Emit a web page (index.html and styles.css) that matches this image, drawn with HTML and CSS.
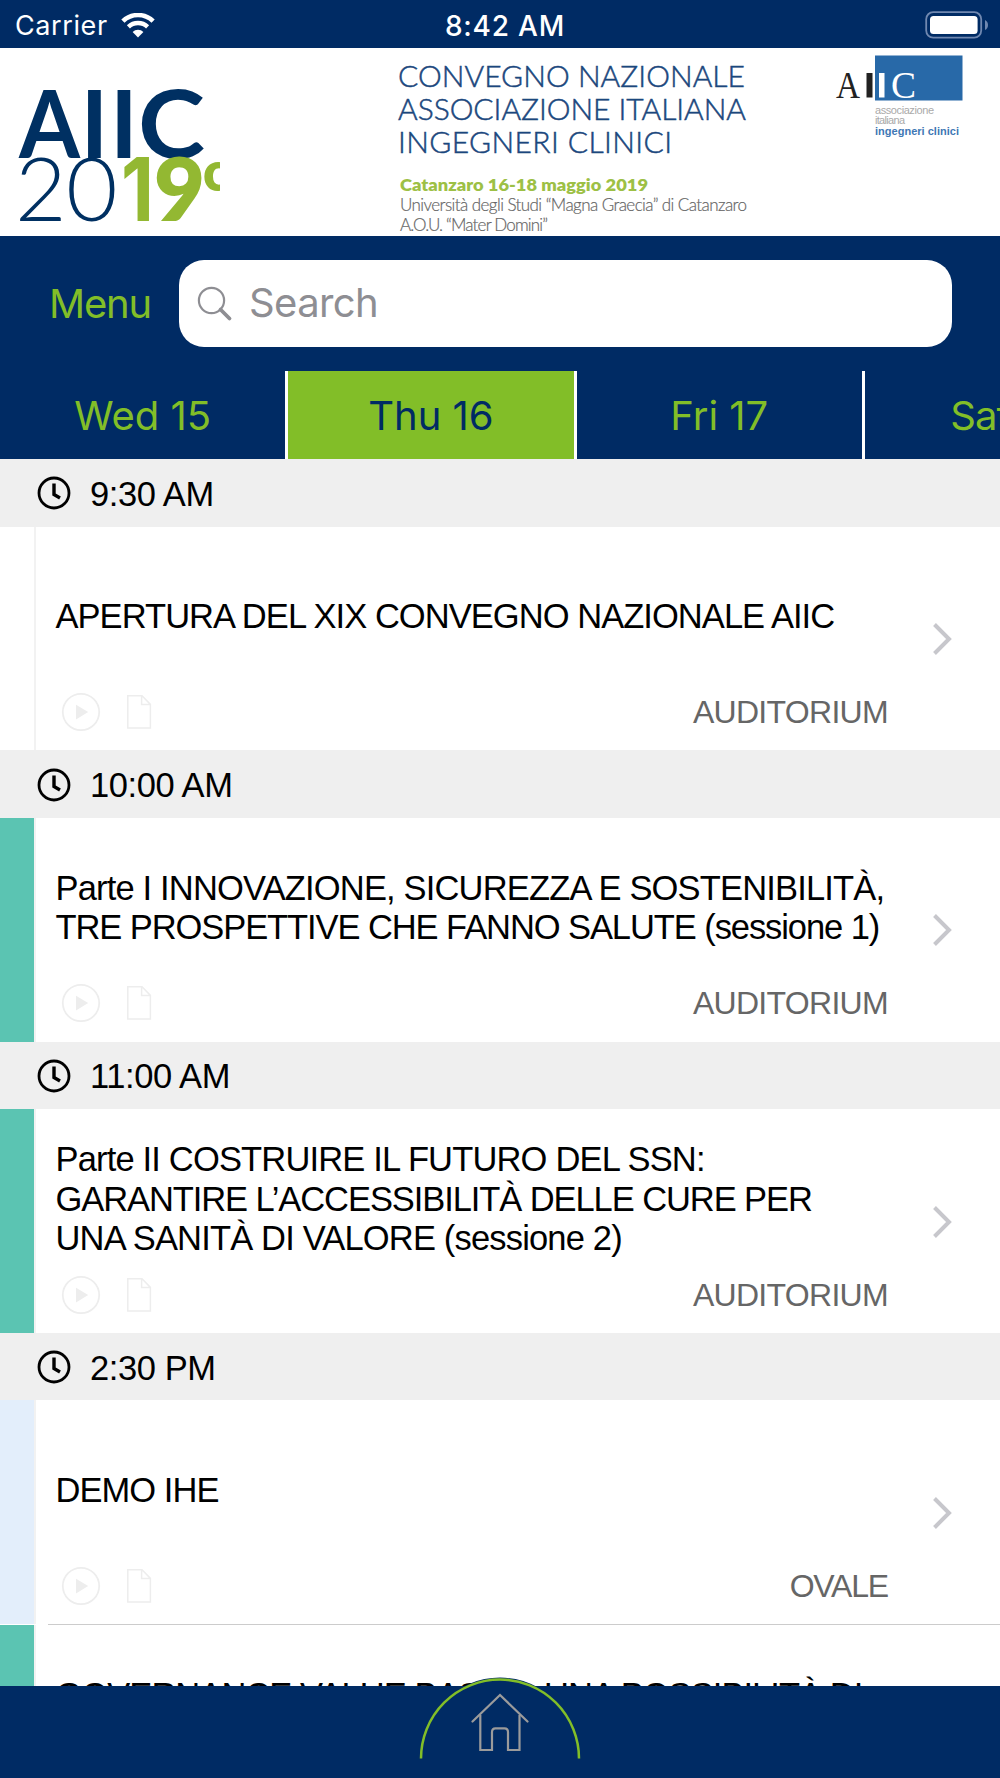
FILE: index.html
```html
<!DOCTYPE html>
<html lang="it">
<head>
  <meta charset="utf-8">
  <title>AIIC 2019</title>
  <link rel="stylesheet" href="styles.css">
</head>
<body>
  <svg class="sprite">
    <symbol id="clock" viewBox="0 0 34 34">
      <circle cx="17" cy="17" r="15" fill="none" stroke="#000" stroke-width="2.8"/>
      <path d="M17 7.5V18.5L23 22" fill="none" stroke="#000" stroke-width="3.4"/>
    </symbol>
    <symbol id="play" viewBox="0 0 40 40">
      <circle cx="20" cy="20" r="18.2" fill="none" stroke="#ededed" stroke-width="1.7"/>
      <path d="M15 12.8L27.2 20L15 27.4Z" fill="#ededed"/>
    </symbol>
    <symbol id="doc" viewBox="0 0 26 36">
      <path d="M1.8 1.8H16L24.4 10.4V34H1.8ZM15.6 1.8V10.6H24.4" fill="none" stroke="#ededed" stroke-width="1.5"/>
    </symbol>
    <symbol id="chevron" viewBox="0 0 20 32">
      <path d="M1.5 1.5L16 16L1.5 30.5" fill="none" stroke="#c7c7cc" stroke-width="4"/>
    </symbol>
  </svg>

  <div class="statusbar">
    <div class="carrier">
      <span>Carrier</span>
      <svg class="wifi" viewBox="0 0 34 25" width="34" height="25">
        <path d="M1.9 8.2A21.6 21.6 0 0 1 32.1 8.2" fill="none" stroke="#fff" stroke-width="4.6"/>
        <path d="M7.4 13.8A14 14 0 0 1 26.6 13.8" fill="none" stroke="#fff" stroke-width="4.4"/>
        <path d="M11.6 18.9A7.6 7.6 0 0 1 22.4 18.9L17 24.4Z" fill="#fff"/>
      </svg>
    </div>
    <span class="time">8:42 AM</span>
    <svg class="battery" viewBox="0 0 64 28" width="64" height="28">
      <rect x="1.2" y="1.2" width="55" height="25.4" rx="7" fill="none" stroke="#7088b0" stroke-width="1.8"/>
      <rect x="5" y="5" width="47.6" height="18" rx="3.5" fill="#fff"/>
      <path d="M60 9V19Q63 17.5 63 14Q63 10.5 60 9Z" fill="#7088b0"/>
    </svg>
  </div>

  <svg class="banner" viewBox="0 0 1000 188" width="1000" height="188">
    <clipPath id="half"><rect x="200" y="100" width="20" height="50"/></clipPath>
    <g class="logo-top">
      <text x="19" y="110" textLength="61" lengthAdjust="spacingAndGlyphs">A</text>
      <text x="80.5" y="110">I</text>
      <text x="110" y="110">I</text>
      <text x="138" y="110" textLength="67" lengthAdjust="spacingAndGlyphs">C</text>
    </g>
    <text class="logo-year" y="173" x="15 66">20</text>
    <text class="logo-one" x="121" y="173" textLength="33" lengthAdjust="spacingAndGlyphs">1</text>
    <text class="logo-edition" x="154" y="173">9</text>
    <text class="logo-c" x="203" y="143" clip-path="url(#half)">c</text>

    <g class="headline">
      <text x="398" y="39" textLength="347">CONVEGNO NAZIONALE</text>
      <text x="398" y="72" textLength="348">ASSOCIAZIONE ITALIANA</text>
      <text x="398" y="105" textLength="274">INGEGNERI CLINICI</text>
    </g>
    <text class="when" x="400" y="143" textLength="248" lengthAdjust="spacingAndGlyphs">Catanzaro 16-18 maggio 2019</text>
    <g class="where">
      <text x="400" y="163" textLength="347">Università degli Studi “Magna Graecia” di Catanzaro</text>
      <text x="400" y="182.500" textLength="148">A.O.U. “Mater Domini”</text>
    </g>

    <rect x="875" y="7.5" width="87.5" height="45" fill="#2869a8"/>
    <text class="brand" x="836" y="49.5" textLength="24" lengthAdjust="spacingAndGlyphs">A</text>
    <rect x="866.5" y="25" width="6" height="24.5" fill="#222"/>
    <rect x="879" y="25" width="5.5" height="24.5" fill="#fff"/>
    <text class="brand brand-white" x="891" y="49.5" textLength="25" lengthAdjust="spacingAndGlyphs">C</text>
    <g class="brand-name">
      <text x="875" y="65.5" textLength="59">associazione</text>
      <text x="875" y="76" textLength="30">italiana</text>
      <text class="brand-strong" x="875" y="86.5" textLength="84">ingegneri clinici</text>
    </g>
  </svg>

  <div class="toolbar">
    <a class="menu">Menu</a>
    <div class="search">
      <svg viewBox="0 0 36 36" width="36" height="36">
        <circle cx="14.5" cy="14.5" r="12.6" fill="none" stroke="#8e8e93" stroke-width="2.2"/>
        <path d="M23.5 23.5L32.5 32.5" stroke="#8e8e93" stroke-width="3.8" stroke-linecap="round"/>
      </svg>
      <span>Search</span>
    </div>
  </div>

  <nav class="days">
    <a class="day">Wed 15</a>
    <a class="day selected">Thu 16</a>
    <a class="day">Fri 17</a>
    <a class="day next">Sat 18</a>
  </nav>

  <main class="agenda">
    <h2 class="hour"><svg><use href="#clock"/></svg>9:30 AM</h2>
    <article class="session">
      <div class="info">
        <h3><span>APERTURA DEL XIX CONVEGNO NAZIONALE AIIC</span></h3>
        <div class="meta"><svg class="play"><use href="#play"/></svg><svg class="doc"><use href="#doc"/></svg><span class="room">AUDITORIUM</span></div>
      </div>
      <svg class="chevron"><use href="#chevron"/></svg>
    </article>

    <h2 class="hour"><svg><use href="#clock"/></svg>10:00 AM</h2>
    <article class="session teal">
      <div class="info">
        <h3><span class="loose">Parte I INNOVAZIONE, SICUREZZA E SOSTENIBILITÀ,</span><span class="tight">TRE PROSPETTIVE CHE FANNO SALUTE (sessione 1)</span></h3>
        <div class="meta"><svg class="play"><use href="#play"/></svg><svg class="doc"><use href="#doc"/></svg><span class="room">AUDITORIUM</span></div>
      </div>
      <svg class="chevron"><use href="#chevron"/></svg>
    </article>

    <h2 class="hour"><svg><use href="#clock"/></svg>11:00 AM</h2>
    <article class="session teal">
      <div class="info">
        <h3><span class="loose">Parte II COSTRUIRE IL FUTURO DEL SSN:</span><span class="tight">GARANTIRE L’ACCESSIBILITÀ DELLE CURE PER</span><span class="loose">UNA SANITÀ DI VALORE (sessione 2)</span></h3>
        <div class="meta"><svg class="play"><use href="#play"/></svg><svg class="doc"><use href="#doc"/></svg><span class="room">AUDITORIUM</span></div>
      </div>
      <svg class="chevron"><use href="#chevron"/></svg>
    </article>

    <h2 class="hour"><svg><use href="#clock"/></svg>2:30 PM</h2>
    <article class="session pale">
      <div class="info">
        <h3><span>DEMO IHE</span></h3>
        <div class="meta"><svg class="play"><use href="#play"/></svg><svg class="doc"><use href="#doc"/></svg><span class="room narrow">OVALE</span></div>
      </div>
      <svg class="chevron"><use href="#chevron"/></svg>
    </article>
    <hr class="divider">
    <article class="session teal last">
      <div class="info">
        <h3><span>GOVERNANCE VALUE BASED: UNA POSSIBILITÀ DI</span></h3>
      </div>
    </article>
  </main>

  <footer class="tabbar">
    <svg class="home" viewBox="0 0 166 86" width="166" height="86">
      <path d="M3 84A80 81.5 0 0 1 163 84Z" fill="#002b64"/>
      <path d="M4 83.5A79 79 0 0 1 162 83.5" fill="none" stroke="#82be28" stroke-width="2.5"/>
      <g fill="none" stroke="#9b9b9b" stroke-width="2.2">
        <path d="M55.5 46.5L83 20L110.5 46.5" stroke-linecap="round"/>
        <path d="M63.3 40V75H75V57Q75 53.3 78.5 53.3H87.5Q91 53.3 91 57V75H102.5V40"/>
      </g>
    </svg>
  </footer>
</body>
</html>
```

FILE: styles.css
```css
* { margin: 0; padding: 0; box-sizing: border-box; }
body {
  width: 1000px;
  height: 1778px;
  overflow: hidden;
  display: flex;
  flex-direction: column;
  background: #fff;
  font-family: "Liberation Sans", Arial, sans-serif;
  color: #000;
}
svg { display: block; flex-shrink: 0; }
.sprite { display: none; }

.statusbar {
  height: 48px;
  flex-shrink: 0;
  display: grid;
  grid-template-columns: 1fr auto 1fr;
  align-items: center;
  padding: 2px 11px 0 15px;
  background: #002b64;
  color: #fff;
  font: 27px/44px Inter, sans-serif;
}
.carrier { display: flex; align-items: center; gap: 13px; }
.carrier span { padding-top: 2px; letter-spacing: 0.6px; }
.time { padding: 2px 0 0 6px; font-weight: 500; font-size: 28px; letter-spacing: 0.8px; }
.battery { justify-self: end; }

.banner { background: #fff; font-family: Lato, sans-serif; }
.logo-top { font-size: 94px; font-weight: 700; fill: #003062; }
.logo-year { font-size: 89px; font-weight: 300; fill: #003062; }
.logo-one { font: 700 88px Inter, sans-serif; fill: #93b832; }
.logo-edition { font-size: 88px; font-weight: 800; fill: #93b832; }
.logo-c { font-size: 54px; font-weight: 800; fill: #93b832; }
.headline { font-size: 30px; font-weight: 300; fill: #1b477d; stroke: #1b477d; stroke-width: 0.5px; }
.when { font-size: 17px; font-weight: 800; fill: #9dc045; }
.where { font-size: 17px; font-weight: 300; fill: #666; stroke: #666; stroke-width: 0.2px; }
.brand { font: 37px "Liberation Serif", serif; fill: #222; }
.brand-white { fill: #fff; }
.brand-name { font: 11px "Liberation Sans", sans-serif; fill: #aaa; }
.brand-strong { font-weight: bold; fill: #3f78b5; }

.toolbar {
  height: 135px;
  flex-shrink: 0;
  display: flex;
  padding: 24px 48px 24px 49px;
  background: #002b64;
  font: 40px/87px Inter, sans-serif;
}
.menu { width: 130px; color: #82be28; letter-spacing: -1.2px; }
.search {
  flex: 1;
  display: flex;
  align-items: center;
  gap: 16px;
  padding: 0 18px;
  border-radius: 25px;
  background: #fff;
  color: #8e8e93;
}
.search span { padding-bottom: 2px; line-height: 85px; letter-spacing: -0.6px; }

.days {
  height: 88px;
  flex-shrink: 0;
  display: flex;
  overflow: hidden;
  background: #002b64;
  font: 40px/89px Inter, sans-serif;
}
.day {
  flex: 0 0 288.3px;
  border-right: 3px solid #fff;
  text-align: center;
  color: #82be28;
}
.day.selected { background: #82be28; color: #002b64; }
.day.next { padding-right: 7px; letter-spacing: -1px; }

.agenda { flex: 1; overflow: hidden; }
.hour {
  height: 67.6px;
  display: flex;
  align-items: center;
  gap: 19px;
  padding: 3px 0 0 37px;
  background: #efefef;
  font-size: 34.5px;
  font-weight: normal;
  letter-spacing: -0.4px;
}
.hour svg { width: 34px; height: 34px; margin-top: -2px; }
.session {
  height: 223.7px;
  display: flex;
  align-items: center;
  border-left: 34px solid #fff;
}
.teal { border-left-color: #5bc4b2; }
.pale { border-left-color: #e3eefb; }
.info {
  width: 855px;
  height: 100%;
  padding-left: 19.5px;
  border-left: 2px solid #f2f2f2;
}
.info h3 {
  height: 178px;
  display: flex;
  flex-direction: column;
  justify-content: center;
  padding-top: 2px;
  font-size: 34.5px;
  line-height: 39.2px;
  font-weight: normal;
  letter-spacing: -0.95px;
  white-space: nowrap;
}
.info .loose { letter-spacing: -0.83px; }
.info .tight { letter-spacing: -1.08px; }
.meta {
  height: 15px;
  display: flex;
  align-items: center;
  padding-left: 5px;
}
.play { width: 40px; height: 40px; }
.doc { width: 26px; height: 36px; margin-left: 25px; }
.room {
  margin-left: auto;
  padding: 1px 1px 0 0;
  font-size: 32px;
  letter-spacing: -0.7px;
  color: #666;
}
.narrow { letter-spacing: -1.2px; }
.chevron { width: 20px; height: 32px; margin: 1px 0 0 43.5px; }
.divider { height: 1px; margin-left: 48px; border: none; background: #ccc; }
.last .info h3 { height: 138px; }

.tabbar {
  height: 92px;
  flex-shrink: 0;
  display: flex;
  justify-content: center;
  background: #002b64;
}
.home { margin-top: -11px; }
```
